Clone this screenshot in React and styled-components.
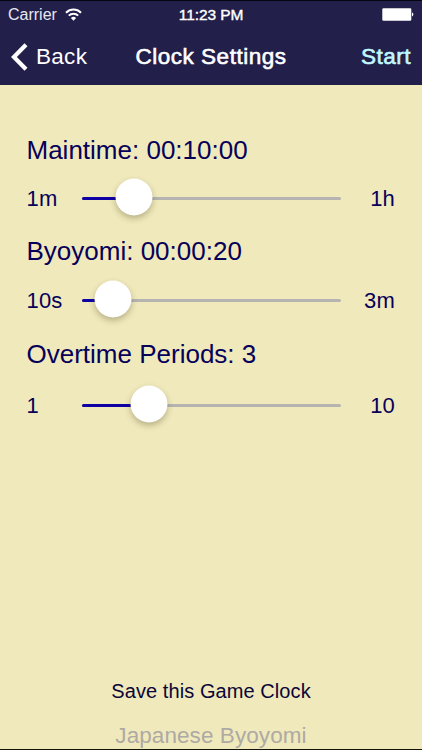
import React from 'react';
import styled, { createGlobalStyle } from 'styled-components';

const settings = [
  { title: 'Maintime: 00:10:00', min: '1m', max: '1h', value: 52, top: 50, gap: 16 },
  { title: 'Byoyomi: 00:00:20', min: '10s', max: '3m', value: 31, top: 19, gap: 17 },
  { title: 'Overtime Periods: 3', min: '1', max: '10', value: 67.5, top: 20, gap: 19 },
];

const App = () => (
  <>
    <GlobalStyle />
    <Screen>
      <Header>
        <StatusBar>
          <Carrier>
            <span>Carrier</span>
            <WifiIcon />
          </Carrier>
          <Time>11:23 PM</Time>
          <BatteryIcon />
        </StatusBar>
        <NavBar>
          <BackButton>
            <BackIcon />
            <span>Back</span>
          </BackButton>
          <NavTitle>Clock Settings</NavTitle>
          <StartButton>Start</StartButton>
        </NavBar>
      </Header>
      <Content>
        {settings.map((item) => (
          <Setting key={item.title} $top={item.top} $gap={item.gap}>
            <SettingTitle>{item.title}</SettingTitle>
            <SliderRow>
              <span>{item.min}</span>
              <Slider>
                <Fill style={{ width: item.value }} />
                <Thumb style={{ left: item.value }} />
              </Slider>
              <MaxLabel>{item.max}</MaxLabel>
            </SliderRow>
          </Setting>
        ))}
      </Content>
      <Footer>
        <SaveButton>Save this Game Clock</SaveButton>
        <ClockName>Japanese Byoyomi</ClockName>
      </Footer>
    </Screen>
  </>
);

const WifiIcon = () => (
  <svg width="17" height="13" viewBox="0 0 17 13" fill="none" stroke="#fff" strokeWidth="2">
    <path d="M1 4.7a10.6 10.6 0 0 1 15 0" />
    <path d="M3.8 7.6a6.6 6.6 0 0 1 9.4 0" />
    <path d="M8.5 12.8L5.9 10.1a3.7 3.7 0 0 1 5.2 0z" fill="#fff" stroke="none" />
  </svg>
);

const BatteryIcon = () => (
  <svg width="32" height="13" viewBox="0 0 32 13" fill="#fff">
    <rect x="0.3" y="0.3" width="29" height="12.4" rx="1.2" />
    <path d="M30 4.6c1.8.4 1.8 3.4 0 3.8z" />
  </svg>
);

const BackIcon = () => (
  <svg width="17" height="28" viewBox="0 0 17 28" fill="none" stroke="#fff" strokeWidth="4.2">
    <path d="M15 1.8L2.9 14L15 26.2" />
  </svg>
);

const GlobalStyle = createGlobalStyle`
  body {
    margin: 0;
    overflow: hidden;
  }
`;

const Screen = styled.div`
  box-sizing: border-box;
  display: flex;
  flex-direction: column;
  width: 422px;
  height: 750px;
  overflow: hidden;
  border-bottom: 1px solid #15120c;
  background: #f0e9bc;
  color: #07005a;
  font-family: 'Liberation Sans', Arial, sans-serif;
`;

const Header = styled.div`
  box-sizing: border-box;
  height: 85px;
  border-top: 1px solid #05050f;
  background: #22204b;
  color: #fff;
`;

const StatusBar = styled.div`
  display: grid;
  grid-template-columns: 1fr auto 1fr;
  align-items: center;
  height: 27px;
  padding: 0 8px;
  font-size: 16px;
  line-height: 27px;
  > svg {
    justify-self: end;
  }
`;

const Carrier = styled.div`
  display: flex;
  align-items: center;
  gap: 8px;
  color: #e9e8f2;
  svg {
    margin-top: -1px;
  }
`;

const Time = styled.div`
  font-size: 15.5px;
  letter-spacing: -0.1px;
  -webkit-text-stroke: 0.4px #fff;
`;

const NavBar = styled.div`
  display: grid;
  grid-template-columns: 1fr auto 1fr;
  align-items: center;
  height: 57px;
  padding: 0 11px;
  font-size: 22.5px;
  line-height: 57px;
`;

const BackButton = styled.div`
  display: flex;
  align-items: center;
  gap: 8px;
  letter-spacing: 0.3px;
`;

const NavTitle = styled.div`
  letter-spacing: 0.5px;
  -webkit-text-stroke: 0.6px currentColor;
`;

const StartButton = styled.div`
  justify-self: end;
  color: #c3f8ff;
  letter-spacing: 0.5px;
  -webkit-text-stroke: 0.6px currentColor;
`;

const Content = styled.div`
  flex: 1;
  padding: 0 27px 0 26.5px;
`;

const Setting = styled.div`
  display: flex;
  flex-direction: column;
  gap: ${({ $gap }) => $gap}px;
  padding-top: ${({ $top }) => $top}px;
`;

const SettingTitle = styled.div`
  font-size: 26px;
  line-height: 30px;
`;

const SliderRow = styled.div`
  display: grid;
  grid-template-columns: 55px 259px 1fr;
  align-items: center;
  height: 36px;
  font-size: 22px;
  line-height: 36px;
  letter-spacing: 0.2px;
`;

const Slider = styled.div`
  position: relative;
  height: 3px;
  margin-bottom: 2px;
  border-radius: 2px;
  background: #b5b4b0;
`;

const Fill = styled.div`
  height: 3px;
  border-radius: 2px;
  background: #0d00a4;
`;

const Thumb = styled.div`
  position: absolute;
  top: 0;
  width: 37px;
  height: 37px;
  border-radius: 50%;
  background: #fff;
  box-shadow: 0 3px 6px rgba(60, 55, 20, 0.32);
  transform: translate(-50%, -50%);
`;

const MaxLabel = styled.span`
  text-align: right;
`;

const Footer = styled.div`
  display: flex;
  flex-direction: column;
  align-items: center;
  height: 70px;
  white-space: nowrap;
`;

const SaveButton = styled.div`
  flex: none;
  height: 42px;
  color: #0b0538;
  font-size: 20px;
  line-height: 24px;
  letter-spacing: 0.08px;
`;

const ClockName = styled.div`
  flex: none;
  color: #aeaaa3;
  font-size: 22.5px;
  line-height: 30px;
  letter-spacing: 0.08px;
`;

export default App;
